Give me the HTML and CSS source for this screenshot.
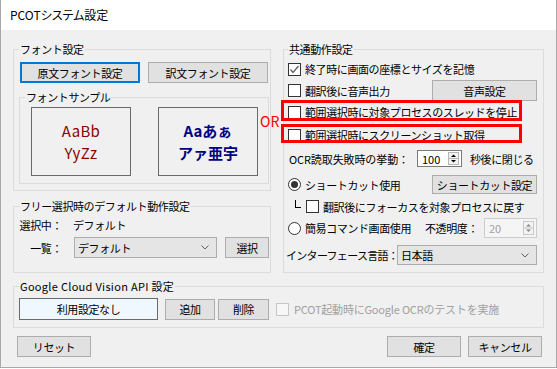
FILE: index.html
```html
<!DOCTYPE html>
<html lang="ja">
<head>
<meta charset="utf-8">
<title>PCOTシステム設定</title>
<link rel="stylesheet" href="styles.css">
</head>
<body>
<div class="window">
  <div class="titlebar">PCOTシステム設定</div>
  <div class="content">
    <div class="columns">
      <div class="col-left">
        <section class="group group-font">
          <div class="group-title">フォント設定</div>
          <div class="font-buttons">
            <button class="btn btn-focus btn-font">原文フォント設定</button>
            <button class="btn btn-font">訳文フォント設定</button>
          </div>
          <section class="group group-sample">
            <div class="group-title group-title-sample">フォントサンプル</div>
            <div class="samples">
              <div class="sample sample-src"><span>AaBb</span><span>YyZz</span></div>
              <div class="sample sample-dst"><span>Aaあぁ</span><span>アァ亜宇</span></div>
            </div>
          </section>
        </section>
        <section class="group group-free">
          <div class="group-title">フリー選択時のデフォルト動作設定</div>
          <div class="free-row">
            <span class="free-label">選択中：</span><span class="free-value">デフォルト</span>
          </div>
          <div class="free-row free-row-list">
            <span class="free-label">一覧：</span>
            <div class="combo combo-free"><span>デフォルト</span><svg class="chev" width="8" height="5" viewBox="0 0 8 5"><polyline points="0.5,0.5 4,4 7.5,0.5" fill="none" stroke="#606060"/></svg></div>
            <button class="btn btn-select">選択</button>
          </div>
        </section>
      </div>

      <section class="group group-common">
        <div class="group-title">共通動作設定</div>
        <div class="row row1">
          <span class="cb"><svg width="11" height="11" viewBox="0 0 11 11"><polyline points="1.5,5.5 4,8.5 9.5,2" fill="none" stroke="#606060" stroke-width="1.3"/></svg></span>
          <span>終了時に画面の座標とサイズを記憶</span>
        </div>
        <div class="row row2">
          <span class="cb"></span>
          <span>翻訳後に音声出力</span>
          <button class="btn btn-right">音声設定</button>
        </div>
        <div class="row row3">
          <span class="cb"></span>
          <span>範囲選択時に対象プロセスのスレッドを停止</span>
        </div>
        <div class="row row4">
          <span class="cb"></span>
          <span>範囲選択時にスクリーンショット取得</span>
        </div>
        <div class="row row-ocr">
          <span class="ocr-label">OCR読取失敗時の挙動：</span>
          <div class="spin spin-ocr"><span>100</span><svg class="spin-arrows" width="11" height="13" viewBox="0 0 11 13"><rect x="0.5" y="0.5" width="10" height="12" fill="#f3f3f3" stroke="#b5b5b5"/><line x1="0.5" y1="6.5" x2="10.5" y2="6.5" stroke="#b5b5b5"/><path d="M3 5h5L5.5 2.5z" fill="#000"/><path d="M3 8h5L5.5 10.5z" fill="#000"/></svg></div>
          <span class="ocr-after">秒後に閉じる</span>
        </div>
        <div class="row row-radio1">
          <span class="rb on"></span>
          <span>ショートカット使用</span>
          <button class="btn btn-right btn-short">ショートカット設定</button>
        </div>
        <div class="row row-sub">
          <span class="elbow"></span>
          <span class="cb"></span>
          <span>翻訳後にフォーカスを対象プロセスに戻す</span>
        </div>
        <div class="row row-radio2">
          <span class="rb"></span>
          <span class="radio2-text">簡易コマンド画面使用</span>
          <span class="opacity-label">不透明度：</span>
          <div class="spin spin-off"><span>20</span><svg class="spin-arrows" width="11" height="14" viewBox="0 0 11 14"><rect x="0.5" y="0.5" width="10" height="13" fill="#f3f3f3" stroke="#c8c8c8"/><line x1="0.5" y1="7" x2="10.5" y2="7" stroke="#c8c8c8"/><path d="M3 5.5h5L5.5 3z" fill="#8a8a8a"/><path d="M3 8.5h5L5.5 11z" fill="#8a8a8a"/></svg></div>
        </div>
        <div class="row row-lang">
          <span class="lang-label">インターフェース言語：</span>
          <div class="combo combo-lang"><span>日本語</span><svg class="chev" width="8" height="5" viewBox="0 0 8 5"><polyline points="0.5,0.5 4,4 7.5,0.5" fill="none" stroke="#606060"/></svg></div>
        </div>
      </section>
    </div>

    <section class="group group-google">
      <div class="group-title group-title-google">Google Cloud Vision API 設定</div>
      <div class="google-row">
        <div class="api-box">利用設定なし</div>
        <button class="btn btn-add">追加</button>
        <button class="btn btn-del">削除</button>
        <span class="cb cb-off"></span>
        <span class="google-test">PCOT起動時にGoogle OCRのテストを実施</span>
      </div>
    </section>

    <div class="footer">
      <button class="btn btn-foot">リセット</button>
      <div class="footer-right">
        <button class="btn btn-foot">確定</button>
        <button class="btn btn-foot">キャンセル</button>
      </div>
    </div>
  </div>

  <div class="mark-or">OR</div>
  <div class="mark-box mark-box1"></div>
  <div class="mark-box mark-box2"></div>
</div>
</body>
</html>
```

FILE: styles.css
```css
* { box-sizing: border-box; }
html, body { margin: 0; padding: 0; }
body {
  width: 557px;
  height: 369px;
  overflow: hidden;
  background: #ffffff;
  font-family: "Noto Sans CJK JP", "Noto Sans", sans-serif;
  font-size: 11px;
  line-height: 14px;
  letter-spacing: -0.4px;
  color: #000;
}
.window {
  position: relative;
  width: 557px;
  height: 368px;
  border: 1px solid #a8a8a8;
  border-top: none;
  background: #f0f0f0;
  display: flex;
  flex-direction: column;
}
.titlebar {
  height: 30px;
  flex: none;
  background: #fff;
  padding-left: 9px;
  display: flex;
  align-items: center;
  font-size: 12px;
  letter-spacing: 0;
  font-feature-settings: "palt";
}
.content {
  flex: 1;
  padding: 19px 12px 0 12px;
  display: flex;
  flex-direction: column;
}
.columns {
  display: grid;
  grid-template-columns: 258px 261px;
  column-gap: 12px;
}
.col-left { display: flex; flex-direction: column; }

.group {
  border: 1px solid #dcdcdc;
}
.group-title {
  margin-top: -8px;
  height: 14px;
  line-height: 14px;
  width: max-content;
  padding: 0 1px;
  background: #f0f0f0;
  white-space: nowrap;
}

/* buttons */
.btn {
  font: inherit;
  letter-spacing: inherit;
  color: #000;
  background: #e1e1e1;
  border: 1px solid #adadad;
  padding: 0;
  margin: 0;
  display: flex;
  align-items: center;
  justify-content: center;
  white-space: nowrap;
}
.btn-focus { border: 2px solid #0078d7; }

/* font group */
.group-font {
  height: 142px;
  padding: 0 2px 0 5px;
}
.font-buttons {
  display: flex;
  gap: 8px;
  margin: 6px 0 0 1px;
}
.btn-font { width: 120px; height: 21px; }
.group-sample {
  margin-top: 14px;
  width: 250px;
  padding: 0 0 7px 11px;
}
.group-title-sample { margin-left: -6px; }
.samples {
  display: flex;
  gap: 27px;
  margin-top: 3px;
}
.sample {
  width: 100px;
  height: 69px;
  border: 1px solid #6a6a6a;
  display: flex;
  flex-direction: column;
  align-items: center;
  justify-content: center;
  font-size: 15px;
  line-height: 22px;
  letter-spacing: 0;
}
.sample span { display: block; height: 22px; }
.sample-src { color: #8b0000; letter-spacing: 0.3px; }
.sample-dst { color: #000080; font-weight: bold; }

/* free group */
.group-free {
  margin-top: 15px;
  height: 67px;
  padding: 0 0 0 5px;
}
.free-row {
  display: flex;
  align-items: center;
  height: 18px;
  margin-top: 3px;
  margin-left: -5px;
}
.free-row-list { height: 21px; margin-top: 3px; }
.free-label {
  width: 59px;
  text-align: right;
  padding-right: 11px;
}
.combo {
  height: 21px;
  border: 1px solid #adadad;
  background: #e5e5e5;
  display: flex;
  align-items: center;
  justify-content: space-between;
  padding: 0 7px 0 3px;
}
.combo-free { width: 143px; margin-left: 1px; }
.chev { display: block; }
.btn-select { width: 44px; height: 21px; margin-left: 8px; }

/* common group */
.group-common {
  padding: 0 6px 6px 4px;
}
.row {
  display: flex;
  align-items: center;
  white-space: nowrap;
}
.row1 { margin-top: 2px; height: 22px; }
.row2 { height: 21px; }
.row3 { height: 22px; }
.row4 { height: 24px; }
.row-ocr { height: 23px; }
.row-radio1 { margin-top: 3px; height: 23px; }
.row-sub { height: 21px; }
.row-radio2 { height: 22px; }
.row-lang { margin-top: 6px; height: 20px; }

.cb {
  width: 13px;
  height: 13px;
  flex: none;
  border: 1px solid #333;
  background: #fff;
  margin-right: 4px;
  display: flex;
  align-items: center;
  justify-content: center;
}
.cb svg { display: block; }
.cb-off { border-color: #c6c6c6; background: #f7f7f7; margin-right: 5px; }
.rb {
  width: 13px;
  height: 13px;
  flex: none;
  border: 1px solid #333;
  border-radius: 50%;
  background: #fff;
  margin-right: 4px;
  display: flex;
  align-items: center;
  justify-content: center;
}
.rb.on::after {
  content: "";
  width: 7px;
  height: 7px;
  border-radius: 50%;
  background: #333;
}
.btn-right { margin-left: auto; width: 105px; height: 21px; }
.btn-short { height: 19px; }

.ocr-label { width: 129px; padding-left: 1px; letter-spacing: -0.1px; }
.spin {
  display: flex;
  align-items: center;
  justify-content: space-between;
  background: #fff;
  border: 1px solid #7a7a7a;
  padding: 0 2px 0 4px;
  letter-spacing: 0;
}
.spin-ocr { width: 45px; height: 17px; }
.spin-arrows { display: block; }
.ocr-after { margin-left: 8px; }

.elbow {
  width: 6px;
  height: 8px;
  margin: -5px 5px 0 7px;
  border-left: 1px solid #000;
  border-bottom: 1px solid #000;
  flex: none;
}
.radio2-text { width: 120px; }
.opacity-label { width: 59px; }
.spin-off {
  width: 53px;
  height: 20px;
  border-color: #cccccc;
  background: #f5f5f5;
  color: #a0a0a0;
}
.lang-label { width: 111px; margin-left: -2px; letter-spacing: -0.7px; }
.combo-lang { width: 140px; height: 20px; }

/* google group */
.group-google {
  margin-top: 13px;
  height: 42px;
  padding: 0 0 0 5px;
}
.group-title-google { letter-spacing: 0.3px; }
.google-row {
  display: flex;
  align-items: center;
  margin-top: 5px;
  height: 22px;
  white-space: nowrap;
}
.api-box {
  width: 139px;
  height: 22px;
  border: 1px solid #6a6a6a;
  background: #f0f8ff;
  display: flex;
  align-items: center;
  justify-content: center;
}
.btn-add { width: 50px; height: 21px; margin-left: 7px; }
.btn-del { width: 51px; height: 21px; margin-left: 3px; }
.google-row .cb-off { margin-left: 7px; }
.google-test { color: #a0a0a0; letter-spacing: -0.2px; }

/* footer */
.footer {
  margin-top: 8px;
  display: flex;
  justify-content: space-between;
  padding: 0 2px 0 4px;
}
.footer-right { display: flex; gap: 7px; }
.btn-foot { width: 74px; height: 21px; }

/* annotations */
.mark-or {
  position: absolute;
  left: 259px;
  top: 113px;
  font-size: 14px;
  line-height: 16px;
  letter-spacing: 0;
  color: #ff0000;
}
.mark-box {
  position: absolute;
  left: 280px;
  width: 241px;
  border: 3px solid #ff0000;
}
.mark-box1 { top: 100px; height: 21px; }
.mark-box2 { top: 124px; height: 19px; }
```
